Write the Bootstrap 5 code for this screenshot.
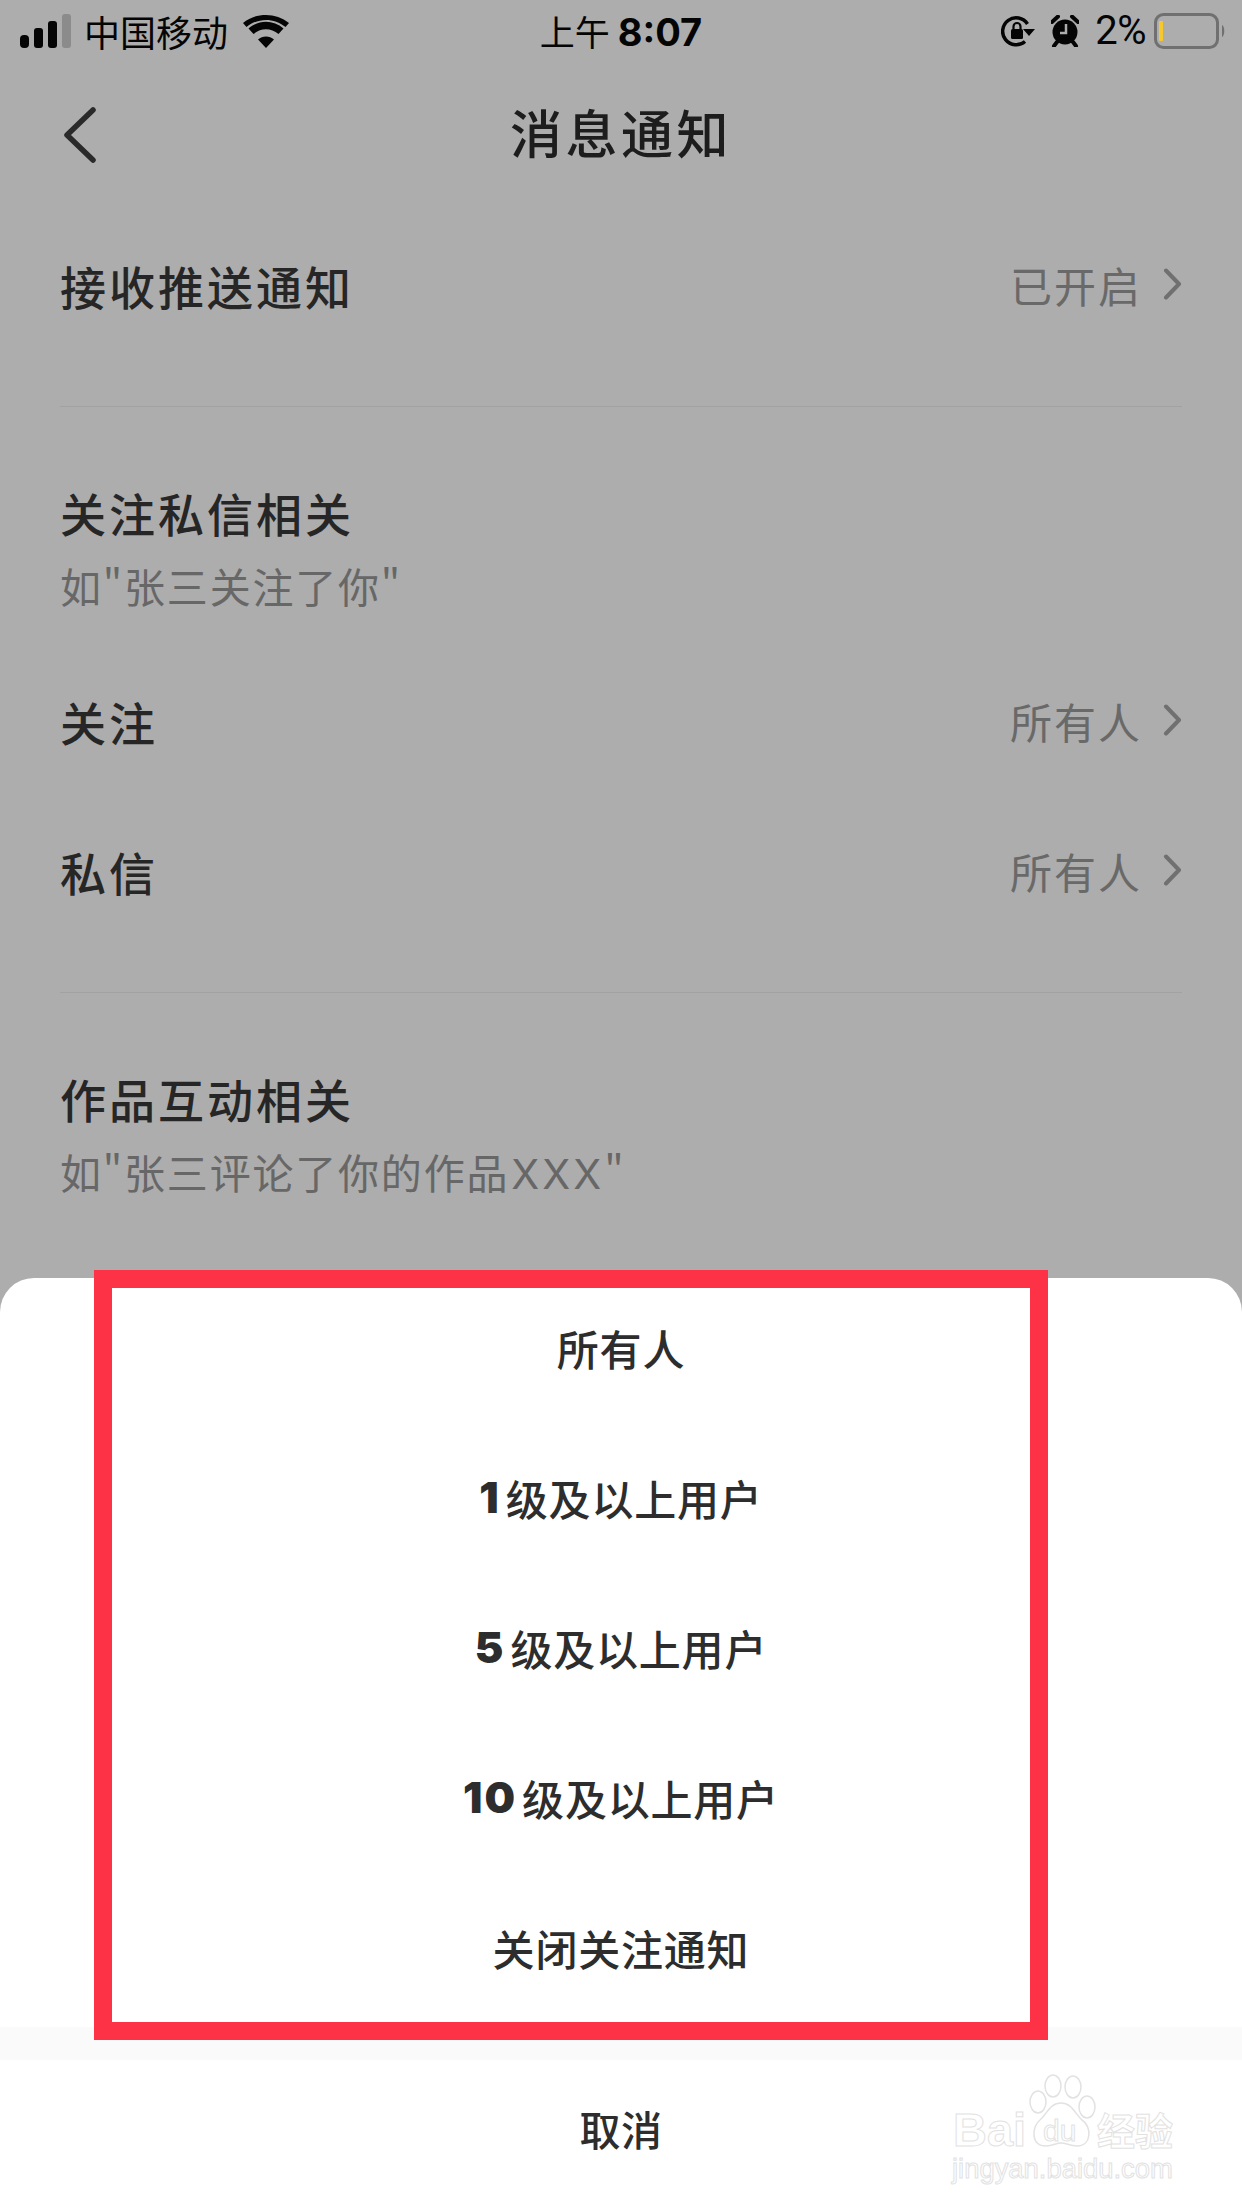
<!DOCTYPE html>
<html lang="zh-CN">
<head>
    <meta charset="UTF-8">
    <meta name="viewport" content="width=device-width, initial-scale=1.0">
    <title>消息通知</title>
    <link href="https://cdn.jsdelivr.net/npm/bootstrap@5.3.0/dist/css/bootstrap.min.css" rel="stylesheet">
    <style>
    html, body { height: 2208px; overflow: hidden; }
    body {
      background: #adadad;
      font-family: "Noto Sans CJK SC", "Liberation Sans", sans-serif;
      color: #262626;
    }
    .phone-page { height: 2208px; width: 1242px; }

    /* status bar */
    .status-bar { height: 62px; color: #050505; }
    .status-carrier { font-size: 36px; line-height: 62px; margin-left: 12px; margin-right: 15px; white-space: nowrap; }
    .status-time { font-size: 35px; line-height: 62px; white-space: nowrap; }
    .status-time b { font-family: Inter, "Liberation Sans", sans-serif; font-weight: 700; font-size: 38px; margin-left: 8px; }
    .status-left { width: 480px; padding-left: 20px; }
    .status-right { width: 480px; padding-right: 16px; }
    .status-pct { font-family: Roboto, "Liberation Sans", sans-serif; font-size: 40px; line-height: 62px; letter-spacing: -0.5px; }

    /* header */
    .top-nav { height: 148px; position: relative; padding-bottom: 8px; }
    .top-nav svg { position: absolute; left: 62px; top: 45px; }
    .top-title { font-size: 52px; font-weight: 500; letter-spacing: 3.500px; color: #1d1d1d; margin: 0; line-height: 1.2; }

    /* settings list */
    .settings-list { padding: 0 60px; }
    .set-row { height: 150px; font-size: 46px; font-weight: 500; letter-spacing: 3px; }
    .set-value { font-size: 42px; font-weight: 400; color: #696969; letter-spacing: 2px; padding-bottom: 2px; }
    .set-value svg { margin-left: 21px; }
    .set-rule { border-top: 1px solid #a2a2a2; margin-top: 46px; }
    .set-head { font-size: 46px; font-weight: 500; letter-spacing: 3px; line-height: 70px; padding-top: 70px; }
    .set-sub { font-size: 41px; letter-spacing: 1.800px; color: #676767; line-height: 70px; margin-top: 3px; margin-bottom: 26px; }
    .set-sub em { font-family: Inter, "Liberation Sans", sans-serif; font-style: normal; font-size: 41px; letter-spacing: 3px; margin-left: -9px; }

    /* bottom sheet */
    .sheet {
      height: 930px;
      background: #fff;
      border-radius: 34px 34px 0 0;
      position: relative;
      color: #2d2d2d;
    }
    .sheet-list { margin-top: -6px; }
    .sheet-item { height: 150px; font-size: 42px; font-weight: 500; letter-spacing: 0.800px; }
    .sheet-item b { font-family: Inter, "Liberation Sans", sans-serif; font-weight: 900; font-size: 43px; letter-spacing: 2px; margin-right: 5px; }
    .sheet-gap { height: 33px; margin-top: 5px; background: #fafafa; }
    .sheet-cancel { height: 144px; font-size: 41px; font-weight: 500; letter-spacing: 0.600px; padding-bottom: 6px; }

    /* red annotation frame lies over the sheet */
    .red-frame {
      position: absolute;
      left: 94px; top: -8px;
      width: 954px; height: 770px;
      border: 18px solid #fe3246;
      pointer-events: none;
    }

    /* watermark */
    .mark-wrap { position: absolute; left: 950px; top: 2072px; width: 232px; height: 110px; }
    .mark-wrap svg { position: absolute; left: 0; top: 0; }
    .mark-text {
      position: absolute;
      color: #fff;
      -webkit-text-stroke: 1px #e2e2e2;
      line-height: 1;
      white-space: nowrap;
    }
    .mark-bai { left: 3px; top: 30px; font: 700 47px "Liberation Sans", sans-serif; }
    .mark-du { left: 93px; top: 42px; font: 400 30px "Liberation Sans", sans-serif; }
    .mark-cn { left: 147px; top: 29px; font: 700 38px "Noto Sans CJK SC", sans-serif; }
    .mark-url { left: 2px; top: 81px; font: 400 27.400px "Liberation Sans", sans-serif; }
    </style>
</head>
<body>
<div class="phone-page d-flex flex-column">

    <div class="status-bar d-flex justify-content-between align-items-center">
        <div class="status-left d-flex align-items-center">
            <svg width="52" height="34" viewBox="0 0 52 34">
                <rect x="0" y="21" width="9" height="13" rx="4" fill="#050505"/>
                <rect x="14" y="14" width="9" height="20" rx="3" fill="#050505"/>
                <rect x="28" y="7" width="9" height="27" rx="3" fill="#050505"/>
                <rect x="42" y="0" width="9" height="34" rx="3" fill="#8b8b8b"/>
            </svg>
            <span class="status-carrier">中国移动</span>
            <svg width="46" height="34" viewBox="0 0 46 34">
                <path d="M23 34 L15 25.500 C19.500 21.500 26.500 21.500 31 25.500 Z" fill="#050505"/>
                <path d="M10.500 21 L5.500 15.500 C15.500 6.500 30.500 6.500 40.500 15.500 L35.500 21 C28 14.500 18 14.500 10.500 21 Z" fill="#050505" transform="translate(0 -1)"/>
                <path d="M3.500 12 L0 8 C13 -2.800 33 -2.800 46 8 L42.500 12 C31 2.500 15 2.500 3.500 12 Z" fill="#050505" transform="translate(0 1)"/>
            </svg>
        </div>
        <div class="status-time">上午<b>8:07</b></div>
        <div class="status-right d-flex justify-content-end align-items-center">
            <svg width="34" height="32" viewBox="0 0 34 32">
                <path d="M24 26.500 A13.500 13.500 0 1 1 26.500 9" fill="none" stroke="#050505" stroke-width="3.500"/>
                <path d="M22 14 H34 L28 21 Z" fill="#050505"/>
                <rect x="10" y="14" width="12" height="10" rx="1.500" fill="#050505"/>
                <path d="M12.500 14 V11.500 A3.500 3.500 0 0 1 19.500 11.500 V14" fill="none" stroke="#050505" stroke-width="2.200"/>
            </svg>
            <svg class="ms-3" width="28" height="32" viewBox="0 0 28 32">
                <circle cx="14" cy="17" r="12.500" fill="#050505"/>
                <path d="M1 7 L7 1.500 M27 7 L21 1.500 M6 27 L3 31 M22 27 L25 31" stroke="#050505" stroke-width="4" stroke-linecap="round"/>
                <path d="M15 9 V18 H9" fill="none" stroke="#adadad" stroke-width="2.500"/>
            </svg>
            <span class="status-pct ms-3">2%</span>
            <svg class="ms-2" width="72" height="36" viewBox="0 0 72 36">
                <rect x="1.500" y="1.500" width="62" height="33" rx="8" fill="none" stroke="#707070" stroke-width="3"/>
                <rect x="5" y="8" width="4" height="20" rx="1" fill="#f5c82e"/>
                <path d="M68 12 C71 13 71 23 68 24 Z" fill="#707070"/>
            </svg>
        </div>
    </div>

    <div class="top-nav d-flex justify-content-center align-items-center">
        <svg width="36" height="56" viewBox="0 0 36 56">
            <path d="M31 3 L5 28 L31 53" fill="none" stroke="#2a2a2a" stroke-width="5.500" stroke-linecap="round" stroke-linejoin="round"/>
        </svg>
        <h1 class="top-title">消息通知</h1>
    </div>

    <div class="settings-list">
        <div class="set-row d-flex justify-content-between align-items-center">
            <span>接收推送通知</span>
            <span class="set-value d-flex align-items-center">已开启
                <svg width="19" height="32" viewBox="0 0 19 32"><path d="M3 2.500 L16 16 L3 29.500" fill="none" stroke="#707070" stroke-width="4" stroke-linecap="round" stroke-linejoin="round"/></svg>
            </span>
        </div>
        <div class="set-rule"></div>

        <div class="set-head">关注私信相关</div>
        <div class="set-sub">如"张三关注了你"</div>
        <div class="set-row d-flex justify-content-between align-items-center">
            <span>关注</span>
            <span class="set-value d-flex align-items-center">所有人
                <svg width="19" height="32" viewBox="0 0 19 32"><path d="M3 2.500 L16 16 L3 29.500" fill="none" stroke="#707070" stroke-width="4" stroke-linecap="round" stroke-linejoin="round"/></svg>
            </span>
        </div>
        <div class="set-row d-flex justify-content-between align-items-center">
            <span>私信</span>
            <span class="set-value d-flex align-items-center">所有人
                <svg width="19" height="32" viewBox="0 0 19 32"><path d="M3 2.500 L16 16 L3 29.500" fill="none" stroke="#707070" stroke-width="4" stroke-linecap="round" stroke-linejoin="round"/></svg>
            </span>
        </div>
        <div class="set-rule"></div>

        <div class="set-head">作品互动相关</div>
        <div class="set-sub">如"张三评论了你的作品 <em>XXX</em>"</div>
    </div>

    <div class="sheet mt-auto">
        <div class="sheet-list">
            <div class="sheet-item d-flex justify-content-center align-items-center">所有人</div>
            <div class="sheet-item d-flex justify-content-center align-items-center"><b>1</b>级及以上用户</div>
            <div class="sheet-item d-flex justify-content-center align-items-center"><b>5</b>级及以上用户</div>
            <div class="sheet-item d-flex justify-content-center align-items-center"><b>10</b>级及以上用户</div>
            <div class="sheet-item d-flex justify-content-center align-items-center">关闭关注通知</div>
        </div>
        <div class="sheet-gap"></div>
        <div class="sheet-cancel d-flex justify-content-center align-items-center">取消</div>
        <div class="red-frame"></div>
    </div>

    <div class="mark-wrap">
        <svg width="160" height="80" viewBox="0 0 160 80" fill="#fff" stroke="#e2e2e2" stroke-width="1.500">
            <ellipse cx="88" cy="30" rx="8" ry="11"/>
            <ellipse cx="103" cy="14" rx="8" ry="11"/>
            <ellipse cx="123" cy="15" rx="8" ry="11"/>
            <ellipse cx="137" cy="35" rx="8" ry="11"/>
            <path d="M111 31 C100 31 97 42 90 48 C82 54 80 74 96 74 C103 74 106 71 111 71 C116 71 120 74 127 74 C142 74 142 54 132 48 C125 42 122 31 111 31 Z"/>
        </svg>
        <span class="mark-text mark-bai">Bai</span>
        <span class="mark-text mark-du">du</span>
        <span class="mark-text mark-cn">经验</span>
        <span class="mark-text mark-url">jingyan.baidu.com</span>
    </div>
</div>

<script src="https://cdn.jsdelivr.net/npm/bootstrap@5.3.0/dist/js/bootstrap.bundle.min.js"></script>
</body>
</html>
